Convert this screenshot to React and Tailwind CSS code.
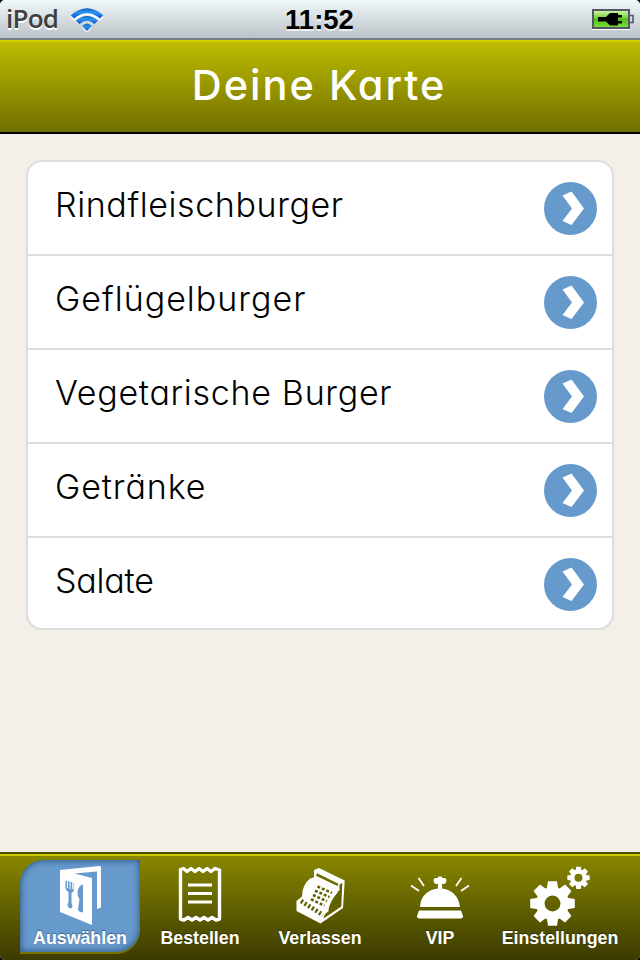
import React from "react";

const items = [
  { label: "Rindfleischburger", tracking: "tracking-[0.6px]" },
  { label: "Geflügelburger", tracking: "tracking-[1px]" },
  { label: "Vegetarische Burger", tracking: "tracking-[0.7px]" },
  { label: "Getränke", tracking: "tracking-[0.9px]" },
  { label: "Salate", tracking: "tracking-[-0.2px]" },
];

function WifiIcon() {
  return (
    <svg className="ml-[12px] h-[26px] w-[34px]" viewBox="0 0 34 26">
      <defs>
        <linearGradient id="wifi" x1="0" y1="0" x2="0" y2="1">
          <stop offset="0" stopColor="#1262c4" />
          <stop offset=".4" stopColor="#2b93ee" />
          <stop offset="1" stopColor="#0b50cf" />
        </linearGradient>
      </defs>
      <g fill="#fff" transform="translate(0 1.500)">
        <path d="M0.5 8.500Q17-5.500 33.500 8.500L29.500 12.500Q17 1 4.500 12.500Z" />
        <path d="M12 19Q17 14.500 22 19L17 24Z" />
      </g>
      <g fill="url(#wifi)">
        <path d="M.7 8.200Q17-5.500 33.300 8.200L30 11.500Q17 1 4 11.500Z" />
        <path d="M6 13.500Q17 4.500 28 13.500L24.500 17Q17 10.500 9.500 17Z" />
        <path d="M12 19Q17 14 22 19L17 24Z" />
      </g>
    </svg>
  );
}

function BatteryIcon() {
  return (
    <svg className="h-[22px] w-[42px]" viewBox="0 0 42 22">
      <defs>
        <linearGradient id="charge" x1="0" y1="0" x2="0" y2="1">
          <stop offset="0" stopColor="#d4f6ae" />
          <stop offset=".4" stopColor="#83d749" />
          <stop offset=".5" stopColor="#55bc1c" />
          <stop offset="1" stopColor="#7ee33c" />
        </linearGradient>
      </defs>
      <path d="M0 20.500H38" stroke="#fff" />
      <rect x="1" y="1" width="36" height="18" fill="url(#charge)" stroke="#535866" strokeWidth="2" />
      <path d="M38 6.500H41V13.500H38" fill="#d5dadd" stroke="#535866" strokeWidth="1.600" />
      <path d="M6 8H14L18 4H26V6H30V8.500H26V12H30V14.500H26V16.500H18L14 12.500H6Z" fill="#000" />
    </svg>
  );
}

function Arrow() {
  return (
    <svg className="h-[53px] w-[53px]" viewBox="0 0 53 53">
      <circle cx="26.500" cy="26.500" r="26.500" fill="#6699cc" />
      <path d="M18.500 13.500L27.500 9.500L40 26.500L27.500 43L18.500 39L28 26.500Z" fill="#fff" />
    </svg>
  );
}

function MenuCardIcon() {
  return (
    <svg className="h-[60px] w-[42px] translate-x-px" viewBox="0 0 42 60">
      <path d="M0 4L39.500 0Q41 0 41 2V41.500L37 43V5.500L14.500 7.500L32 12V59L0 46Z" fill="#fff" />
      <g fill="#6699cc">
        <path d="M5.500 14.500L7 15V22L8 22.500V15L9.600 15.500V23L10.600 23.500V15.800L12.200 16.200V23L13.500 23.500V17L14 17V24Q13.500 26 11.500 27V37L12.500 40Q12.200 42.500 10 42.500Q7.500 41.500 7.500 39L8.500 36V26Q5.500 24.500 5.500 22Z" />
        <path d="M23 18.500V46.500Q18 46 18 43L19.500 33Q17 30 17.500 26Q18.500 19 23 18.500Z" />
      </g>
    </svg>
  );
}

function ReceiptIcon() {
  return (
    <svg className="h-[60px] w-[44px]" viewBox="0 0 44 60" fill="none" stroke="#fff">
      <path d="M2.500 3.500L5.500 2.500L9 5.500L13 2.500L17 5.500L21 2.500L25 5.500L29 2.500L33 5.500L37 2.500L41.500 4V53L38 54L34 51.500L30 54L26 51.500L22 54L18 51.500L14 54L10 51.500L6 54L2.500 53Z" strokeWidth="3.400" strokeLinejoin="round" />
      <path d="M10 19H34M10 27.500H34M10 36H34" strokeWidth="3" />
    </svg>
  );
}

function RegisterIcon() {
  return (
    <svg className="h-[60px] w-[50px]" viewBox="0 0 50 60">
      <path d="M19 4L24 2L49.700 14.500L48 42L25.500 57.500L1.500 45V35L7 30.500Q7 19 15 12.500L19 11.500Z" fill="#fff" />
      <path d="M21.500 8.500L43 18.800" fill="none" stroke="#6f6e00" strokeWidth="2.600" />
      <path d="M47.300 17L46.300 40.500L28.500 52.500Q29 48 32.500 46Q33 36 42.500 25.500L44.500 24.500V18.500Z" fill="#626100" />
      <path d="M42.500 25.500Q33 36 32.500 46" fill="none" stroke="#fff" strokeWidth="1.500" />
      <g stroke="#626100" strokeWidth="2.600" strokeDasharray="2.900 1.900">
        <path d="M22.500 20.500L37 26.900" />
        <path d="M20 24.700L34.500 31.100" />
        <path d="M18 29L32 35.300" />
        <path d="M16 33.300L29.500 39.600" />
      </g>
      <path d="M6 35L28 49" stroke="#626100" strokeWidth="4.500" strokeDasharray="2.200 2.100" />
    </svg>
  );
}

function BellIcon() {
  return (
    <svg className="h-[60px] w-[60px]" viewBox="0 0 60 60" fill="#fff">
      <path d="M10 41Q11 25 28 22.500V18H26Q23.500 17 23.500 14.500Q23.500 12 26 12H28V10.500H32V12H34Q36.500 12 36.500 14.500Q36.500 17 34 18H32V22.500Q48 25 50 41Z" />
      <path d="M9 44.500H51L53 50Q53 52.500 50.500 52.500H9.500Q7 52.500 7 50Z" />
      <path d="M1 19.500L9 25M8.500 12L14 20M51.500 12L46 20M59 19.500L51 25" stroke="#fff" strokeWidth="1.800" />
    </svg>
  );
}

function Gear({ x, y, scale }) {
  const teeth = [0, 45, 90, 135, 180, 225, 270, 315];
  return (
    <g transform={`translate(${x} ${y}) scale(${scale})`}>
      <circle r="12.200" fill="none" stroke="#fff" strokeWidth="8.500" />
      {teeth.map((a) => (
        <path key={a} d="M-6-13L-4.500-22.300H4.500L6-13Z" fill="#fff" transform={`rotate(${a})`} />
      ))}
    </g>
  );
}

function GearsIcon() {
  return (
    <svg className="h-[60px] w-[62px]" viewBox="0 0 62 60">
      <Gear x={23.5} y={37.5} scale={1} />
      <Gear x={49.500} y={11.800} scale={0.5} />
    </svg>
  );
}

const tabs = [
  { label: "Auswählen", icon: <MenuCardIcon />, active: true },
  { label: "Bestellen", icon: <ReceiptIcon /> },
  { label: "Verlassen", icon: <RegisterIcon /> },
  { label: "VIP", icon: <BellIcon /> },
  { label: "Einstellungen", icon: <GearsIcon /> },
];

export default function App() {
  return (
    <div className="h-[960px] w-[640px] overflow-hidden bg-black">
      <div className="flex h-full flex-col overflow-hidden rounded-[5px] bg-[#f4f0e9] font-['Liberation_Sans',Arial,sans-serif]">
        <div className="grid h-[40px] grid-cols-3 items-center border-b-2 border-[#777c84] bg-linear-to-b from-[#f1f8fb] to-[#bcc3c8]">
          <div className="flex items-center pl-[6px]">
            <span className="relative -top-[2px] font-['Open_Sans',sans-serif] text-[26px] leading-[38px] font-semibold tracking-[-0.8px] text-[#404040] [text-shadow:0_2px_0_#fff]">iPod</span>
            <WifiIcon />
          </div>
          <span className="pt-px pr-[1px] text-center text-[27.500px] leading-[38px] font-bold text-black [text-shadow:0_2px_0_#e8edf0]">11:52</span>
          <div className="flex justify-end pt-px pr-[6px]">
            <BatteryIcon />
          </div>
        </div>
        <header className="flex h-[94px] items-start justify-center border-t-2 border-b-2 border-t-[#d2d000] border-b-black bg-linear-to-b from-[#bdbd00] to-[#716f00] pt-[19px]">
          <h1 className="pr-[2px] font-['Inter',sans-serif] text-[41.500px] leading-[48px] font-medium tracking-[2px] text-white [font-feature-settings:'cv11']">Deine Karte</h1>
        </header>
        <main className="flex-1 px-[26px] pt-[26px]">
          <ul className="overflow-hidden rounded-[16px] border-2 border-[#dcdcdc] bg-white">
            {items.map((item) => (
              <li key={item.label} className="flex h-[94px] items-start justify-between border-b-2 border-[#dcdcdc] pt-[20px] pr-[15px] pl-[27px] last:h-[90px] last:border-b-0">
                <span className={`pt-px font-['Inter',sans-serif] text-[34px] leading-[44px] font-[350] text-black [font-feature-settings:'cv11','liga'_0] ${item.tracking}`}>{item.label}</span>
                <Arrow />
              </li>
            ))}
          </ul>
        </main>
        <nav className="flex h-[108px] border-t-2 border-[#4e4d00] bg-linear-to-b from-[#8a8900] to-[#3c3b00]">
          <div className="flex flex-1 border-t-2 border-[#cdcc00] px-[20px] pt-[4px]">
            {tabs.map((tab) => (
              <div
                key={tab.label}
                className={`flex h-[92px] w-[120px] flex-col items-center pt-[6px] ${tab.active ? "rounded-tl-[24px] rounded-br-[24px] bg-[#6699cc] shadow-[inset_0_0_7px_#234b78,0_2px_0_#777500]" : ""}`}
              >
                {tab.icon}
                <span className="pt-px text-[17.800px] leading-[22px] font-bold whitespace-nowrap text-white [text-shadow:0_-1px_1px_rgba(0,0,0,.35)]">{tab.label}</span>
              </div>
            ))}
          </div>
        </nav>
      </div>
    </div>
  );
}
